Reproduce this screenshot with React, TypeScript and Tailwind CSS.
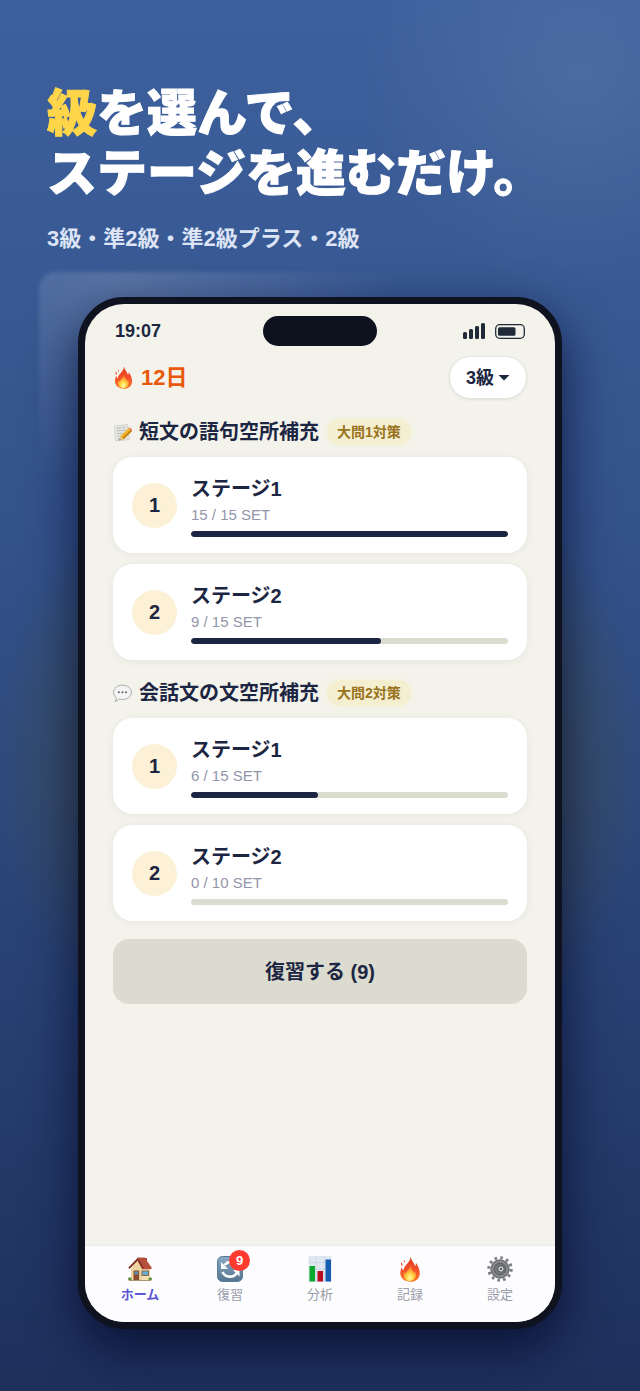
import { useState, type ReactNode } from "react";

type Stage = { number: number; done: number; total: number };

type Section = { title: string; badge: string; icon: ReactNode; stages: Stage[] };

function FlameIcon({ className, id }: { className: string; id: string }) {
  return (
    <svg viewBox="0 0 24 24" preserveAspectRatio="none" className={className} aria-hidden="true">
      <defs>
        <linearGradient id={id} x1="0" y1="0" x2="0" y2="1">
          <stop offset="0" stopColor="#dd3a1e" />
          <stop offset="0.55" stopColor="#f4512a" />
          <stop offset="1" stopColor="#fb7a22" />
        </linearGradient>
        <radialGradient id={id + "-core"} cx="0.5" cy="0.8" r="0.65">
          <stop offset="0" stopColor="#fffbb0" />
          <stop offset="0.4" stopColor="#ffd944" />
          <stop offset="1" stopColor="#fb7c2a" />
        </radialGradient>
      </defs>
      <path d="M12.6 0.6c.5 3.4 3.6 5.6 4.6 8.8.6-.9.8-2 .7-3.2 2.3 3 3.9 6.6 3.9 9.700 0 4.800-4 7.900-9.300 7.900S2.300 20.800 2.300 16c0-2.300.7-4 1.500-5.700.300 1.300.9 2.200 1.700 2.900C6 7.800 12.300 6.300 12.600.6z" fill={"url(#" + id + ")"} />
      <path d="M3.2 5.8c1.300.9 1.600 2.200.9 3.700-1.200-.9-1.500-2.200-.9-3.700zM6 3.600c.9.700 1 1.600.5 2.500-.9-.7-1-1.500-.5-2.500z" fill="#f6502a" />
      <path d="M12.700 8.500c.3 3.200 2.600 4.600 3.200 7.500.6-.5 1-1.200 1.100-2 1 1.500 1.300 2.500 1 4.100-.5 3-3 5-6.200 5s-5.700-2-6.100-4.900c-.2-1.500.1-2.500.7-3.800.4 1 .9 1.500 1.700 1.900.1-3 4-4.300 4.600-7.800z" fill={"url(#" + id + "-core)"} />
    </svg>
  );
}

function MemoIcon() {
  return (
    <svg viewBox="0 0 24 24" className="size-[19px] shrink-0" aria-hidden="true">
      <path d="M2 3.500 18.500 2l2 19-17.500 1.500z" fill="#e6e6e1" stroke="#c9cac8" strokeWidth=".8" />
      <path d="M5 6.500l5-.4M12 6l4-.4M5 10l11-.9M5.500 13.500l7-.5M6 17l4-.3M6.500 20l2-.2" stroke="#a4a6aa" strokeWidth="1.200" strokeDasharray="2 .8" />
      <path d="M20 6l4 4.500L13.500 20.500 8 22l1.500-5.500z" fill="#f4b62c" />
      <path d="M22.200 8.400l1.800 2.100L13.500 20.500l-2-2z" fill="#c9851b" />
      <path d="M9.500 16.500l4 4L8 22z" fill="#e9c894" />
      <path d="M8.500 20.300l1.300 1.200L8 22z" fill="#333" />
      <path d="M20 6c1.500-1 5 2.500 4 4.500z" fill="#df6b60" />
    </svg>
  );
}

function SpeechIcon() {
  return (
    <svg viewBox="0 0 24 24" className="size-[19px] shrink-0" aria-hidden="true">
      <path d="M12 1.500c6.400 0 11.300 3.900 11.300 9S18.400 19.500 12 19.500c-1.600 0-3-.2-4.300-.6-1.400 1.900-3.200 2.900-5.200 3.100 1.200-1.200 1.800-2.700 1.800-4.600C2 15.800.7 13.300.7 10.500c0-5.100 4.900-9 11.300-9z" fill="#f4f4f4" stroke="#a6a6a6" strokeWidth="1.200" />
      <circle cx="7.500" cy="10.500" r="1.200" fill="#555" />
      <circle cx="12" cy="10.500" r="1.200" fill="#555" />
      <circle cx="16.500" cy="10.500" r="1.200" fill="#555" />
    </svg>
  );
}

function HouseIcon() {
  return (
    <svg viewBox="0 0 26 26" className="size-[26px]" aria-hidden="true">
      <path d="M17 2h3v7h-3z" fill="#a34836" />
      <path d="M4 13 9.500 5.500 20 9l3 4v11H4z" fill="#f5dfae" />
      <path d="M4 13l6-7 5 7v11H4z" fill="#ecd3a0" />
      <path d="M11 1.500h6.500L25 12l-1.500 1.200H15.500z" fill="#b5503e" />
      <path d="M1.300 11.500 11 1.500l6 10.800-1.700 1L10.500 5l-8 8z" fill="#8a3527" />
      <path d="M6.500 14.500h5.600V24H6.500z" fill="#8b4b31" />
      <path d="M7.500 15.500h3.600v3H7.500z" fill="#5e90ad" />
      <path d="M14.500 14.500h7.500v5.500h-7.500z" fill="#806750" />
      <path d="M15.500 15.500h5.500v3.500h-5.500z" fill="#68add0" />
      <circle cx="2.800" cy="23" r="1.800" fill="#5c903b" />
      <circle cx="23.200" cy="23" r="1.800" fill="#5c903b" />
      <path d="M2 24h22v1H2z" fill="#a69575" />
    </svg>
  );
}

function RepeatIcon() {
  return (
    <svg viewBox="0 0 26 26" className="size-[26px]" aria-hidden="true">
      <defs>
        <linearGradient id="repeat-bg" x1="0" y1="0" x2="0" y2="1">
          <stop offset="0" stopColor="#8aa9c4" />
          <stop offset="1" stopColor="#54748f" />
        </linearGradient>
      </defs>
      <rect x=".5" y=".5" width="25" height="25" rx="5" fill="url(#repeat-bg)" stroke="#597b98" />
      <path d="M7.500 9C11 5 16 5 20 8" fill="none" stroke="#fff" strokeWidth="2.600" />
      <path d="M4 6v7h7z" fill="#fff" />
      <path d="M5.500 16c3 6 11 6 14.500 1" fill="none" stroke="#fff" strokeWidth="2.600" />
      <path d="M16 14h6.500v6.500z" fill="#fff" />
    </svg>
  );
}

function ChartIcon() {
  return (
    <svg viewBox="0 0 26 26" className="size-[26px]" aria-hidden="true">
      <path d="M1.500 0h23v26h-23z" fill="#dfe8f0" />
      <path d="M1.500 6.500h23M1.500 13h23M1.500 19.500h23M9 0v26M17 0v26" stroke="#c5d3df" strokeWidth=".7" />
      <path d="M2.500 10h5.500v15.500H2.500z" fill="#0ba82d" />
      <path d="M10.500 15h5.500v10.500h-5.500z" fill="#b90e22" />
      <path d="M18.500 3.500H24v22h-5.500z" fill="#155cb3" />
    </svg>
  );
}

function GearIcon() {
  return (
    <svg viewBox="0 0 26 26" className="size-[26px]" aria-hidden="true">
      <circle cx="13" cy="13" r="11.200" fill="none" stroke="#7b7d80" strokeWidth="3" strokeDasharray="2.600 3.264" />
      <circle cx="13" cy="13" r="8.800" fill="#8f9193" stroke="#727476" strokeWidth="1.800" />
      <circle cx="13" cy="13" r="5.800" fill="#747678" stroke="#5f6163" strokeWidth="1.200" />
      <circle cx="14" cy="13" r="3.200" fill="#cfd0d1" stroke="#505254" />
      <circle cx="14" cy="13" r="1.100" fill="#3d3f41" />
    </svg>
  );
}

const sections: Section[] = [
  {
    title: "短文の語句空所補充",
    badge: "大問1対策",
    icon: <MemoIcon />,
    stages: [
      { number: 1, done: 15, total: 15 },
      { number: 2, done: 9, total: 15 },
    ],
  },
  {
    title: "会話文の文空所補充",
    badge: "大問2対策",
    icon: <SpeechIcon />,
    stages: [
      { number: 1, done: 6, total: 15 },
      { number: 2, done: 0, total: 10 },
    ],
  },
];

const tabs = [
  { label: "ホーム", icon: <HouseIcon />, count: 0 },
  { label: "復習", icon: <RepeatIcon />, count: 9 },
  { label: "分析", icon: <ChartIcon />, count: 0 },
  { label: "記録", icon: <FlameIcon className="h-[26px] w-6" id="flame-tab" />, count: 0 },
  { label: "設定", icon: <GearIcon />, count: 0 },
];

function StatusBar() {
  return (
    <div className="grid grid-cols-[1fr_auto_1fr] items-center px-[30px] pt-3">
      <span className="text-lg font-bold leading-6">19:07</span>
      <div className="h-[30px] w-[114px] rounded-full bg-[#0e111e]" />
      <div className="flex items-center justify-end gap-[10px]">
        <svg viewBox="0 0 22 16" className="h-4 w-[22px]" fill="#1f2937" aria-hidden="true">
          <rect x="0" y="9" width="4" height="7" rx="1.500" />
          <rect x="6" y="6" width="4" height="10" rx="1.500" />
          <rect x="12" y="3" width="4" height="13" rx="1.500" />
          <rect x="18" y="0" width="4" height="16" rx="1.500" />
        </svg>
        <svg viewBox="0 0 30 15" className="h-[15px] w-[30px]" aria-hidden="true">
          <rect x=".7" y=".7" width="28.600" height="13.600" rx="4" fill="none" stroke="#1f2937" strokeWidth="1.300" />
          <rect x="3" y="3.200" width="17.500" height="8.600" rx="1.500" fill="#1f2937" />
        </svg>
      </div>
    </div>
  );
}

function StageCard({ stage }: { stage: Stage }) {
  return (
    <li className="flex h-24 items-center gap-[14px] rounded-[20px] bg-white px-[19px] shadow-[0_1px_8px_rgba(30,36,70,0.06)]">
      <span className="flex size-[45px] shrink-0 items-center justify-center rounded-full bg-[#fcf1d6] text-xl font-bold">
        {stage.number}
      </span>
      <div className="flex-1 pt-[2px]">
        <h3 className="text-xl font-bold leading-7">ステージ{stage.number}</h3>
        <p className="text-[15px] leading-6 text-[#9395aa]">
          {stage.done} / {stage.total} SET
        </p>
        <div className="mt-1 h-[6px] overflow-hidden rounded-full bg-[#dbdccf]">
          <div className="h-full rounded-full bg-[#1c2541]" style={{ width: `${(stage.done / stage.total) * 100}%` }} />
        </div>
      </div>
    </li>
  );
}

export default function App() {
  const [activeTab, setActiveTab] = useState("ホーム");

  return (
    <div className="relative isolate flex min-h-screen flex-col overflow-hidden bg-linear-to-b from-[#3d609d] via-[#33528a] via-40% to-[#1e305c] pt-[84px] pb-[62px] font-['Liberation_Sans','Noto_Sans_CJK_JP',sans-serif] text-[#1c2541]">
      {/* Background glows */}
      <div className="absolute -top-36 -right-40 -z-10 size-[440px] rounded-full bg-[radial-gradient(closest-side,rgba(255,255,255,0.08),transparent)]" />
      <div className="absolute inset-x-[39px] top-[272px] -z-10 h-[500px] rounded-t-2xl bg-[radial-gradient(ellipse_280px_220px_at_15%_0%,rgba(255,255,255,0.17),transparent)] blur-[2px]" />
      <div className="absolute -inset-x-2 top-[420px] -z-10 h-[680px] bg-[radial-gradient(closest-side,rgba(72,84,66,0.6)_60%,transparent)]" />

      <header className="px-[47px]">
        <h1 className="text-[50px] font-black leading-[60px] text-white [-webkit-text-stroke:1px_currentColor]">
          <span className="text-[#ffd54a]">級</span>を選んで、
          <br />
          ステージを進むだけ。
        </h1>
        <p className="mt-5 text-[22px] font-bold leading-[30px] text-[#dce4f5]">3級・準2級・準2級プラス・2級</p>
      </header>

      <main className="mx-[78px] mt-[43px] flex flex-1 flex-col rounded-[46px] border-[7px] border-[#0f1320] bg-[#0f1320] shadow-[0_20px_50px_rgba(4,8,40,0.75)]">
        <div className="flex flex-1 flex-col overflow-hidden rounded-[39px] bg-[#f3f3eb]">
          <StatusBar />

          <div className="flex-1 px-7">
            <div className="mt-[10px] flex items-center justify-between">
              <p className="flex items-center gap-[7px] text-[22px] font-bold leading-8 text-[#ea580c]">
                <FlameIcon className="h-[23px] w-[21px]" id="flame-streak" />
                12日
              </p>
              <button type="button" className="flex h-[43px] items-center gap-1 rounded-full border border-[#e4e4df] bg-white px-4 text-lg font-bold shadow-[0_1px_3px_rgba(30,36,70,0.08)]">
                3級
                <svg viewBox="0 0 12 7" className="h-[7px] w-3" aria-hidden="true">
                  <path d="M.5 1h11L6 6.500z" fill="#1c2541" />
                </svg>
              </button>
            </div>

            {sections.map((section) => (
              <section key={section.title} className="mt-[17px]">
                <div className="flex items-center">
                  {section.icon}
                  <h2 className="ml-[7px] text-xl font-bold leading-8">{section.title}</h2>
                  <span className="ml-2 rounded-full bg-[#f5efd2] px-[10px] text-sm font-bold leading-[26px] text-[#99731c] shadow-[0_0_4px_#f5efd2]">
                    {section.badge}
                  </span>
                </div>
                <ul className="mt-[9px] flex flex-col gap-[11px]">
                  {section.stages.map((stage) => (
                    <StageCard key={stage.number} stage={stage} />
                  ))}
                </ul>
              </section>
            ))}

            <button type="button" className="mt-[18px] h-[65px] w-full rounded-2xl bg-[#dbdccf] text-xl font-bold">
              復習する (9)
            </button>
          </div>

          <nav className="grid h-[77px] grid-cols-5 border-t border-[#ececf0] bg-[#fdfdff] px-[10px] pt-[10px]">
            {tabs.map((tab) => (
              <button
                key={tab.label}
                type="button"
                onClick={() => setActiveTab(tab.label)}
                className={`flex flex-col items-center gap-[3px] text-[13px] leading-5 ${activeTab === tab.label ? "font-bold text-[#5b57d6]" : "text-[#9a9ca8]"}`}
              >
                <span className="relative">
                  {tab.icon}
                  {tab.count > 0 && (
                    <span className="absolute -top-[6px] -right-[7px] flex size-[21px] items-center justify-center rounded-full bg-[#ff3b30] text-[13px] font-bold text-white">
                      {tab.count}
                    </span>
                  )}
                </span>
                {tab.label}
              </button>
            ))}
          </nav>
        </div>
      </main>
    </div>
  );
}
